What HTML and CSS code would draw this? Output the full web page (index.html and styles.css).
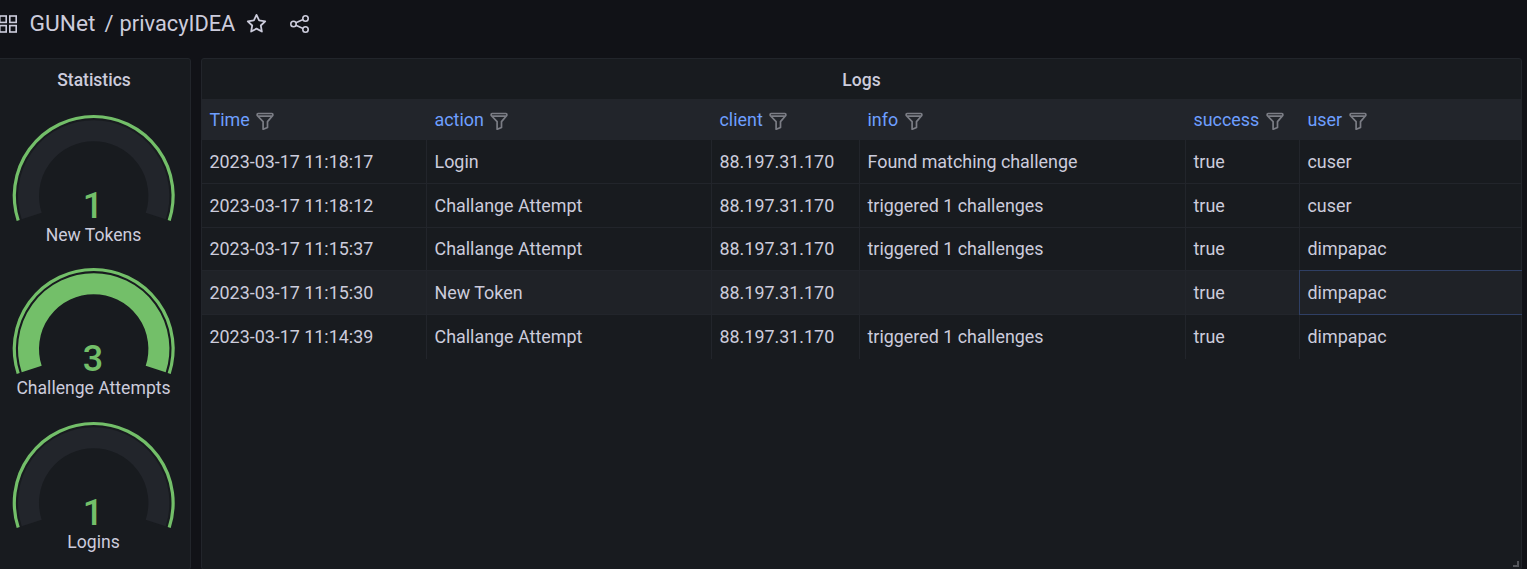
FILE: index.html
```html
<!DOCTYPE html>
<html lang="en">
<head>
<meta charset="utf-8">
<title>GUNet / privacyIDEA</title>
<link rel="stylesheet" href="styles.css">
</head>
<body>
<svg class="defs" width="0" height="0" aria-hidden="true">
  <symbol id="funnel" viewBox="0 0 18 18">
    <path d="M2 1.5h14a.8.8 0 0 1 .8.8v1.2L11.500 9.600v5.900l-4.400 1.800V9.600L1.200 3.500V2.300a.8.8 0 0 1 .8-.8z M1.800 4.200h14.400" fill="none" stroke="currentColor" stroke-width="1.7" stroke-linejoin="round"/>
  </symbol>
</svg>
<header class="topbar">
  <svg class="icon-grid" viewBox="0 0 18 18" aria-hidden="true">
    <rect x="0.8" y="1" width="6.4" height="6.4"/><rect x="10.8" y="1" width="6.4" height="6.4"/>
    <rect x="0.8" y="10.6" width="6.4" height="6.4"/><rect x="10.8" y="10.6" width="6.4" height="6.4"/>
  </svg>
  <span class="crumb-root">GUNet</span>
  <span class="crumb-sep">/</span>
  <span class="crumb-page">privacyIDEA</span>
  <svg class="icon-star" viewBox="0 0 20 20" aria-hidden="true">
    <path d="M10 1.800l2.500 5.300 5.800.8-4.200 4 1 5.800-5.100-2.800-5.100 2.800 1-5.800-4.200-4 5.800-.8z"/>
  </svg>
  <svg class="icon-share" viewBox="0 0 20 20" aria-hidden="true">
    <circle cx="3.500" cy="10" r="2.700"/><circle cx="15.500" cy="4.500" r="2.700"/><circle cx="15.500" cy="15.500" r="2.700"/>
    <path d="M5.900 8.800l7.200-3.200M5.900 11.200l7.200 3.200"/>
  </svg>
</header>
<main class="dashboard">
  <section class="panel stats">
    <h2 class="panel-title">Statistics</h2>
    <div class="gauges">
      <svg class="gauge" viewBox="0 0 190 132" role="img">
        <path class="ring" d="M18.200 102.500A79.400 79.400 0 1 1 169.200 102.500"/>
        <path class="track" d="M31.700 98.100A65.200 65.200 0 1 1 155.700 98.100"/>
        <text class="gauge-value" x="93" y="100">1</text>
        <text class="gauge-label" x="93.500" y="123.300">New Tokens</text>
      </svg>
      <svg class="gauge" viewBox="0 0 190 132" role="img">
        <path class="ring" d="M18.200 102.500A79.400 79.400 0 1 1 169.200 102.500"/>
        <path class="track fill" d="M31.700 98.100A65.200 65.200 0 1 1 155.700 98.100"/>
        <text class="gauge-value" x="93" y="100">3</text>
        <text class="gauge-label" x="93.500" y="123.300">Challenge Attempts</text>
      </svg>
      <svg class="gauge" viewBox="0 0 190 132" role="img">
        <path class="ring" d="M18.200 102.500A79.400 79.400 0 1 1 169.200 102.500"/>
        <path class="track" d="M31.700 98.100A65.200 65.200 0 1 1 155.700 98.100"/>
        <text class="gauge-value" x="93" y="100">1</text>
        <text class="gauge-label" x="93.500" y="123.300">Logins</text>
      </svg>
    </div>
  </section>
  <section class="panel logs">
    <h2 class="panel-title">Logs</h2>
    <div class="table">
      <div class="row head">
        <div class="cell">Time<svg class="funnel"><use href="#funnel"/></svg></div>
        <div class="cell">action<svg class="funnel"><use href="#funnel"/></svg></div>
        <div class="cell">client<svg class="funnel"><use href="#funnel"/></svg></div>
        <div class="cell">info<svg class="funnel"><use href="#funnel"/></svg></div>
        <div class="cell">success<svg class="funnel"><use href="#funnel"/></svg></div>
        <div class="cell">user<svg class="funnel"><use href="#funnel"/></svg></div>
      </div>
      <div class="row">
        <div class="cell">2023-03-17 11:18:17</div><div class="cell">Login</div><div class="cell">88.197.31.170</div><div class="cell">Found matching challenge</div><div class="cell">true</div><div class="cell">cuser</div>
      </div>
      <div class="row">
        <div class="cell">2023-03-17 11:18:12</div><div class="cell">Challange Attempt</div><div class="cell">88.197.31.170</div><div class="cell">triggered 1 challenges</div><div class="cell">true</div><div class="cell">cuser</div>
      </div>
      <div class="row">
        <div class="cell">2023-03-17 11:15:37</div><div class="cell">Challange Attempt</div><div class="cell">88.197.31.170</div><div class="cell">triggered 1 challenges</div><div class="cell">true</div><div class="cell">dimpapac</div>
      </div>
      <div class="row hover">
        <div class="cell">2023-03-17 11:15:30</div><div class="cell">New Token</div><div class="cell">88.197.31.170</div><div class="cell"></div><div class="cell">true</div><div class="cell focus">dimpapac</div>
      </div>
      <div class="row last">
        <div class="cell">2023-03-17 11:14:39</div><div class="cell">Challange Attempt</div><div class="cell">88.197.31.170</div><div class="cell">triggered 1 challenges</div><div class="cell">true</div><div class="cell">dimpapac</div>
      </div>
    </div>
    <span class="resize" aria-hidden="true"></span>
  </section>
</main>
</body>
</html>
```
FILE: styles.css
```css
* { box-sizing: border-box; }
html, body { margin: 0; height: 100%; }
body {
  background: #111217;
  color: #ccccdc;
  font-family: Roboto, "Liberation Sans", sans-serif;
  overflow: hidden;
}
.defs { position: absolute; }
.topbar {
  height: 58px;
  display: flex;
  align-items: center;
  padding-bottom: 11px;
  margin-left: -1px;
  color: #ccccdc;
}
.icon-grid { width: 18px; height: 18px; margin-right: 12.5px; fill: none; stroke: #ccccdc; stroke-width: 1.6; }
.crumb-root { font-size: 22.75px; }
.crumb-page { font-size: 21.8px; }
.crumb-sep { font-size: 22px; margin: 0 6px 0 9px; }
.icon-star { width: 21px; height: 21px; margin-left: 11px; fill: none; stroke: #ccccdc; stroke-width: 1.7; stroke-linejoin: round; }
.icon-share { width: 20px; height: 20px; margin-left: 22.5px; fill: none; stroke: #ccccdc; stroke-width: 1.6; }
.dashboard {
  display: flex;
  gap: 10px;
  margin: 0 5px 0 -3px;
  height: 512px;
}
.panel {
  background: #181b1f;
  border: 1px solid #22252b;
  border-radius: 3px;
  position: relative;
}
.stats { width: 194px; flex: none; }
.logs { flex: 1; min-width: 0; }
.panel-title {
  margin: 0;
  height: 40px;
  line-height: 42px;
  font-size: 17.5px;
  font-weight: 500;
  text-align: center;
  color: #ccccdc;
}
.gauges { display: flex; flex-direction: column; gap: 21.5px; padding: 18.7px 0 0 2px; }
.gauge { width: 190px; height: 132px; display: block; flex: none; overflow: visible; }
.ring { fill: none; stroke: #73bf69; stroke-width: 3.2; }
.track { fill: none; stroke: #22252b; stroke-width: 21; }
.track.fill { stroke: #73bf69; }
.gauge-value { font-size: 36px; font-weight: 500; fill: #73bf69; text-anchor: middle; }
.gauge-label { font-size: 17.6px; fill: #ccccdc; text-anchor: middle; }
.table { display: flex; flex-direction: column; font-size: 17.9px; }
.row {
  display: grid;
  grid-template-columns: 225px 285px 148px 326px 114px 222px;
  height: 43.75px;
  border-bottom: 1px solid #22252b;
}
.row.last { border-bottom: 0; }
.row.head {
  height: 41.1px;
  border-bottom: 0;
  background: #22252b;
  color: #6e9fff;
}
.row.hover { background: #1f2227; }
.cell {
  display: flex;
  align-items: center;
  padding-left: 7.5px;
  border-right: 1px solid #22252b;
  white-space: nowrap;
}
.cell:last-child { border-right: 0; }
.cell.focus {
  margin: -1px 0 -1px -1px;
  padding-left: 7.5px;
  border-top: 1px solid #2f3f64;
  border-bottom: 1px solid #2f3f64;
  border-left: 1px solid #2f3f64;
}
.funnel { width: 18px; height: 18px; margin-left: 6.5px; margin-top: 3px; color: #7b7d85; }
.resize {
  position: absolute;
  right: 2px;
  bottom: 2px;
  width: 6px;
  height: 6px;
  border-right: 2px solid #54565b;
  border-bottom: 2px solid #54565b;
}
```
